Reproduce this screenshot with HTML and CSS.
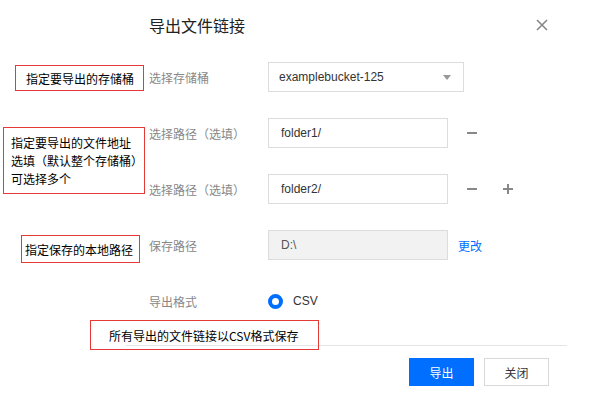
FILE: index.html
```html
<!DOCTYPE html>
<html lang="zh">
<head>
<meta charset="utf-8">
<title>导出文件链接</title>
<link rel="stylesheet" href="styles.css">
</head>
<body>
<div class="dialog">
  <div class="header">
    <h1 class="title">导出文件链接</h1>
    <button class="close" aria-label="关闭">
      <svg width="12" height="12" viewBox="0 0 12 12"><path d="M1 1L11 11M11 1L1 11" stroke="#888" stroke-width="1.6" fill="none"/></svg>
    </button>
  </div>

  <div class="form">
    <div class="row">
      <span class="label">选择存储桶</span>
      <div class="select">
        <span>examplebucket-125</span>
        <svg width="8" height="5" viewBox="0 0 8 5"><path d="M0 0H8L4 5Z" fill="#999"/></svg>
      </div>
    </div>
    <div class="row">
      <span class="label">选择路径（选填）</span>
      <div class="input">folder1/</div>
      <span class="icon-btn first"><svg width="12" height="12" viewBox="0 0 12 12"><path d="M1 6H11" stroke="#888" stroke-width="2"/></svg></span>
    </div>
    <div class="row">
      <span class="label">选择路径（选填）</span>
      <div class="input">folder2/</div>
      <span class="icon-btn first"><svg width="12" height="12" viewBox="0 0 12 12"><path d="M1 6H11" stroke="#888" stroke-width="2"/></svg></span>
      <span class="icon-btn"><svg width="12" height="12" viewBox="0 0 12 12"><path d="M1 6H11M6 1V11" stroke="#888" stroke-width="2"/></svg></span>
    </div>
    <div class="row">
      <span class="label">保存路径</span>
      <div class="input disabled">D:\</div>
      <a class="link" href="#">更改</a>
    </div>
    <div class="row">
      <span class="label">导出格式</span>
      <span class="radio"></span>
      <span class="radio-text">CSV</span>
    </div>
  </div>

  <div class="footer">
    <button class="btn primary">导出</button>
    <button class="btn">关闭</button>
  </div>

  <div class="note note-1">指定要导出的存储桶</div>
  <div class="note note-2">指定要导出的文件地址<br>选填（默认整个存储桶）<br>可选择多个</div>
  <div class="note note-3">指定保存的本地路径</div>
  <div class="note note-4">所有导出的文件链接以CSV格式保存</div>
</div>
</body>
</html>
```

FILE: styles.css
```css
* { box-sizing: border-box; }
html, body { margin: 0; padding: 0; background: #fff; }
body {
  font-family: "Liberation Sans", "Noto Sans CJK SC", Arial, sans-serif;
  font-size: 12px;
  color: #333;
}
.dialog {
  position: relative;
  width: 609px;
  height: 405px;
  overflow: hidden;
}
.header {
  display: flex;
  justify-content: space-between;
  align-items: center;
  height: 62px;
  padding: 13px 61px 25px 149px;
}
.title {
  margin: 0;
  font-size: 16px;
  font-weight: normal;
  line-height: 24px;
  color: #222;
  font-family: "Noto Sans CJK SC", sans-serif;
}
.close {
  border: 0;
  background: none;
  padding: 0;
  width: 12px;
  height: 12px;
  display: flex;
}
.form {
  display: flex;
  flex-direction: column;
  gap: 26px;
  padding-left: 149px;
}
.row {
  display: flex;
  align-items: center;
  height: 30px;
}
.label {
  width: 119px;
  color: #888;
  font-family: "Noto Sans CJK SC", sans-serif;
  font-size: 12px;
}
.select, .input {
  height: 30px;
  border: 1px solid #dcdcdc;
  background: #fff;
  display: flex;
  align-items: center;
  color: #333;
}
.select {
  width: 196px;
  padding: 0 12px 0 10px;
  justify-content: space-between;
}
.input {
  width: 180px;
  padding: 0 12px;
}
.input.disabled {
  background: #f2f2f2;
  color: #555;
}
.icon-btn {
  width: 16px;
  height: 16px;
  display: flex;
  align-items: center;
  justify-content: center;
  margin-left: 20px;
}
.icon-btn.first { margin-left: 16px; }
.link {
  margin-left: 10px;
  color: #006eff;
  text-decoration: none;
  font-family: "Noto Sans CJK SC", sans-serif;
}
.radio {
  width: 15px;
  height: 15px;
  border-radius: 50%;
  border: 4px solid #006eff;
  background: #fff;
}
.radio-text {
  margin-left: 10px;
  color: #333;
}
.footer {
  display: flex;
  justify-content: flex-end;
  gap: 10px;
  margin: 29px 42px 0 126px;
  padding: 12px 18px 0 0;
  border-top: 1px solid #e5e5e5;
}
.btn {
  width: 65px;
  height: 28px;
  border: 1px solid #d9d9d9;
  background: #fff;
  color: #333;
  font-family: "Noto Sans CJK SC", sans-serif;
  font-size: 12px;
  padding: 0;
}
.btn.primary {
  background: #006eff;
  border-color: #006eff;
  color: #fff;
}
.note {
  position: absolute;
  border: 1px solid #e53935;
  color: #000;
  font-family: "Noto Sans CJK SC", sans-serif;
  font-size: 12px;
  display: flex;
  align-items: center;
  white-space: nowrap;
}
.note-1 { left: 15px; top: 65px; width: 129px; height: 26px; padding-left: 10px; }
.note-2 { left: 3px; top: 127px; width: 142px; height: 67px; padding: 0 0 0 7px; line-height: 18px; }
.note-3 { left: 21px; top: 235px; width: 119px; height: 28px; padding-left: 3px; }
.note-4 { left: 90px; top: 320px; width: 229px; height: 30px; padding-left: 18px; }
```
